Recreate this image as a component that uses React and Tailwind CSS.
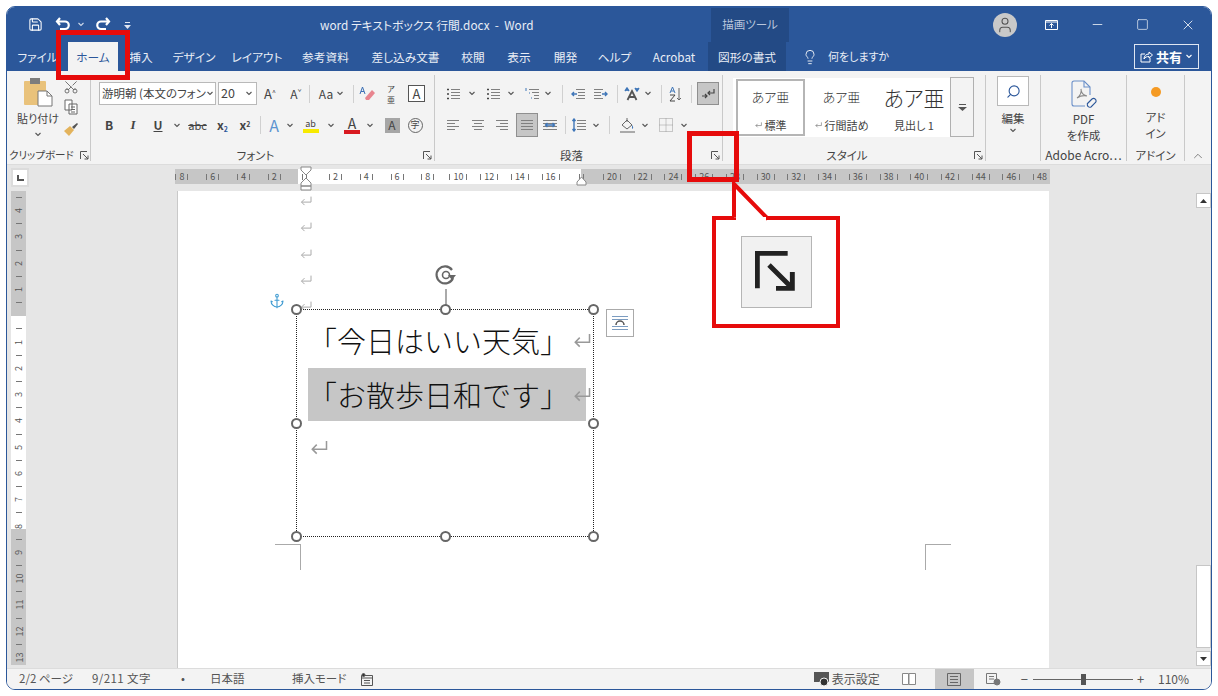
import { Save, Search, Lightbulb, X, Minus, Square, Scissors, Anchor, ChevronUp, User } from 'lucide-react';

// ─── Small drawings ────────────────────────────────────────────
const Chev = ({ color = '#555', className = '' }) => (
  <svg className={`shrink-0 ${className}`} width="8" height="5" viewBox="0 0 8 5" fill="none" stroke={color} strokeWidth="1.1"><path d="M1.500 1l2.500 2.500L6.500 1" /></svg>
);

const Launcher = ({ size = 9, stroke = '#555', width = 1 }) => (
  <svg width={size} height={size} viewBox="0 0 9 9" fill="none" stroke={stroke} strokeWidth={width}>
    <path d="M.5 8V.5H7" /><path d="M3 3l5 5M8 4.500V8H4.500" />
  </svg>
);

const Lines = ({ rows, className = '', children }) => (
  <svg className={`shrink-0 ${className}`} width="14" height="14" viewBox="0 0 14 14" stroke="#808080" strokeWidth="1" fill="none">
    {rows.map(([x1, x2], i) => <path key={i} d={`M${x1} ${2.5 + i * 3}H${x2}`} />)}
    {children}
  </svg>
);

const Ret = ({ w = 12, color = '#aaa' }) => (
  <svg width={w} height={w * 0.85} viewBox="0 0 12 10" fill="none" stroke={color} strokeWidth={1}>
    <path d="M11 .5V6H1.500M4.500 3L1.500 6l3 3" />
  </svg>
);

const Sep = () => <div className="w-px h-[86px] mt-[4px] bg-[#c9c9c9] shrink-0" />;
const Tick = ({ className = '' }) => <span className={`w-px h-[18px] bg-[#d0d0d0] shrink-0 ${className}`} />;

const Cell = ({ className = '', children }) => (
  <div className={`flex items-center justify-center shrink-0 h-full ${className}`}>{children}</div>
);

const GroupLabel = ({ children }) => (
  <div className="mt-auto mb-[2px] h-[14px] flex items-center">
    <span className="flex-1 text-center text-[11.5px] leading-[14px] whitespace-nowrap">{children}</span>
    <span className="w-[14px] flex justify-center"><Launcher /></span>
  </div>
);

const Handle = ({ className }) => (
  <span className={`absolute w-[11px] h-[11px] rounded-full bg-white border-2 border-[#666] ${className}`} />
);

// ─── Title bar + tabs ──────────────────────────────────────────
const tabs = [
  ['ファイル', 'w-[61px]'], ['ホーム', 'w-[50px]'], ['挿入', 'w-[46px]'], ['デザイン', 'w-[60px]'],
  ['レイアウト', 'w-[66px]'], ['参考資料', 'w-[71px]'], ['差し込み文書', 'w-[89px]'], ['校閲', 'w-[46px]'],
  ['表示', 'w-[46px]'], ['開発', 'w-[47px]'], ['ヘルプ', 'w-[51px]'], ['Acrobat', 'w-[68px]'],
];

const TitleBar = () => (
  <div className="h-[35px] flex bg-[#2b579a] text-[#e9eef6] shrink-0">
    <div className="flex items-center w-[313px] pl-[21px] pb-[1px] shrink-0">
      <Save size={15} strokeWidth={1.7} color="#fff" />
      <svg className="ml-[12px]" width="16" height="14" viewBox="0 0 16 14" fill="none" stroke="#fff" strokeWidth="2.200"><path d="M5 1L2 4.500 5 8M2 4.500h8a3.600 3.600 0 010 7.500H5" /></svg>
      <Chev color="#cfd9ea" className="ml-[6px]" />
      <svg className="ml-[10px]" width="16" height="14" viewBox="0 0 16 14" fill="none" stroke="#fff" strokeWidth="2.200"><path d="M11 1l3 3.500L11 8M14 4.500H6A3.600 3.600 0 006 12h5" /></svg>
      <svg className="ml-[13px] mt-[3px]" width="7" height="8" viewBox="0 0 7 8" fill="#dfe6f2"><path d="M1 0h5v1H1zM0 3h7L3.500 7z" /></svg>
    </div>
    <div className="w-[391px] flex items-center text-[11.8px] whitespace-pre shrink-0">word テキストボックス 行間.docx  -  Word</div>
    <div className="w-[78px] mt-[1px] bg-[#234a85] text-[#b9c6dc] text-[11.5px] flex items-center justify-center shrink-0">描画ツール</div>
    <div className="flex-1 flex items-center justify-end">
      <div className="w-[24px] h-[24px] rounded-full bg-[#c9c9c9] flex items-center justify-center mr-[11px]">
        <User size={18} strokeWidth={1.4} color="#555" />
      </div>
      <Cell className="w-[46px]">
        <svg width="13" height="12" viewBox="0 0 13 12" fill="none" stroke="#fff"><path d="M.5 1.500h12v9H.5zM.5 3h12" /><path d="M6.500 9V4.500M4.500 6.500l2-2 2 2" /></svg>
      </Cell>
      <Cell className="w-[46px]"><Minus size={15} strokeWidth={1.2} color="#fff" /></Cell>
      <Cell className="w-[45px]"><Square size={13} strokeWidth={1.2} color="#fff" /></Cell>
      <Cell className="w-[46px]"><X size={16} strokeWidth={1.2} color="#fff" /></Cell>
    </div>
  </div>
);

const TabBar = () => (
  <div className="h-[29px] flex bg-[#2b579a] text-[#e9eef6] text-[11.7px] shrink-0">
    {tabs.map(([label, w]) => (
      <div key={label} className={`${w} flex items-center justify-center shrink-0 ${label === 'ホーム' ? 'bg-[#f3f3f3] text-[#2b579a]' : ''}`}>{label}</div>
    ))}
    <div className="w-[78px] bg-[#234a85] flex items-center justify-center shrink-0">図形の書式</div>
    <div className="ml-[16px] flex items-center gap-[10px]">
      <Lightbulb size={16} strokeWidth={1.3} color="#fff" />
      <span className="text-[11px]">何をしますか</span>
    </div>
    <div className="ml-auto mr-[12px] mt-[2px] w-[65px] h-[25px] border border-[#dfe6f2] flex items-center justify-center gap-[3px]">
      <svg width="13" height="12" viewBox="0 0 13 12" fill="none" stroke="#fff"><path d="M5 3H1v8h9V7" /><path d="M4 8c0-3 2-5 5-5V1l3.500 3L9 7V5.500c-2 0-4 .5-5 2.500z" /></svg>
      <span className="font-bold text-[13px] text-white">共有</span>
      <Chev color="#fff" />
    </div>
  </div>
);

// ─── Ribbon ────────────────────────────────────────────────────
const Clipboard = () => (
  <div className="w-[83px] flex flex-col shrink-0 pt-[6px]">
    <div className="flex">
      <div className="ml-[3px] w-[56px] flex flex-col items-center shrink-0">
        <svg width="30" height="30" viewBox="0 0 30 30">
          <rect x="1" y="4" width="22" height="24" rx="1" fill="#e9c27b" />
          <rect x="7" y="1" width="10" height="6" fill="#7d7d7d" />
          <path d="M15 14h9l5 5v10H15z" fill="#fff" stroke="#777" />
          <path d="M24 14v5h5" fill="none" stroke="#777" />
        </svg>
        <span className="text-[11px] leading-[14px] mt-[4px] whitespace-nowrap">貼り付け</span>
        <Chev className="mt-[7px]" />
      </div>
      <div className="w-[10px] flex flex-col items-center gap-[4px] pt-[2px] shrink-0">
        <Scissors size={16} strokeWidth={1.2} color="#555" className="-rotate-90 shrink-0" />
        <svg className="shrink-0" width="14" height="16" viewBox="0 0 14 16" fill="#fff" stroke="#666"><path d="M1 1h7v10H1zM5 5h8v10H5z" /><path d="M7 8h4M7 10.500h4M7 13h4" /></svg>
        <svg width="16" height="16" viewBox="0 0 16 16" className="mt-[2px] shrink-0"><path d="M1 10l6-5 4 4-5 6z" fill="#e3b35c" /><path d="M9 6l5-4 1 1-4 5z" fill="#555" /></svg>
      </div>
    </div>
    <div className="mt-auto mb-[2px] h-[14px] flex items-center text-[10.5px] pl-[2px]">
      <span className="whitespace-nowrap w-[71px]">クリップボード</span>
      <Launcher />
    </div>
  </div>
);

const Font = () => (
  <div className="w-[343px] flex flex-col shrink-0 pt-[11px]">
    <div className="flex h-[23px]">
      <div className="ml-[8px] w-[117px] bg-white border border-[#b9b9b9] flex items-center justify-between px-[2px] shrink-0">
        <span className="text-[11.5px] whitespace-nowrap">游明朝 (本文のフォン</span>
        <Chev />
      </div>
      <div className="ml-[2px] w-[39px] bg-white border border-[#b9b9b9] flex items-center justify-between px-[2px] pr-[3px] shrink-0">
        <span className="text-[12.5px]">20</span><Chev />
      </div>
      <Cell className="w-[26px] text-[13px]"><span>A<sup className="text-[7px]">^</sup></span></Cell>
      <Cell className="w-[26px] text-[12px]"><span>A<sup className="text-[7px]">ˇ</sup></span></Cell>
      <Tick className="self-center" />
      <Cell className="w-[43px] gap-[3px] text-[12px]">Aa <Chev /></Cell>
      <Tick className="self-center" />
      <Cell className="w-[25px]">
        <svg width="16" height="15" viewBox="0 0 16 15"><path d="M6 12l7-8 3 3-6 7H7z" fill="#e8858f" /><path d="M1 8l2.500-7L6 8M2 5.500h3" fill="none" stroke="#3a6fb5" /></svg>
      </Cell>
      <Cell className="w-[24px] flex-col text-[8px] leading-[11px]"><span>ア</span><span>亜</span></Cell>
      <Cell className="w-[27px]"><span className="w-[17px] h-[17px] border border-[#555] bg-white flex items-center justify-center text-[13px]">A</span></Cell>
    </div>
    <div className="flex h-[24px] mt-[8px] text-[#444]">
      <Cell className="w-[30px] pl-[6px] font-bold text-[12px]">B</Cell>
      <Cell className="w-[24px] font-['Liberation_Serif',serif] italic font-bold text-[13px]">I</Cell>
      <Cell className="w-[26px] font-bold text-[12px] underline">U</Cell>
      <Cell className="w-[12px]"><Chev /></Cell>
      <Cell className="w-[29px] text-[11px] line-through">abc</Cell>
      <Cell className="w-[21px] text-[12px] font-bold"><span>x<sub className="text-[7px] text-[#2b579a]">2</sub></span></Cell>
      <Cell className="w-[24px] text-[12px] font-bold"><span>x<sup className="text-[7px]">2</sup></span></Cell>
      <Cell className="w-[6px]"><Tick /></Cell>
      <Cell className="w-[22px] text-[16px] text-[#5d93d0]">A</Cell>
      <Cell className="w-[10px]"><Chev /></Cell>
      <Cell className="w-[31px]">
        <div className="flex flex-col items-center text-[9px] leading-[11px]">ab<span className="w-[16px] h-[4px] bg-[#f7ea00]" /></div>
      </Cell>
      <Cell className="w-[10px]"><Chev /></Cell>
      <Cell className="w-[32px]">
        <div className="flex flex-col items-center text-[14px] leading-[14px]">A<span className="w-[16px] h-[4px] bg-[#d81920]" /></div>
      </Cell>
      <Cell className="w-[4px]"><Chev /></Cell>
      <Cell className="w-[40px]"><span className="w-[15px] h-[15px] bg-[#a6a6a6] flex items-center justify-center text-[12px]">A</span></Cell>
      <Cell className="w-[6px]"><span className="w-[15px] h-[15px] rounded-full border border-[#666] flex items-center justify-center text-[9px] shrink-0">字</span></Cell>
    </div>
    <GroupLabel>フォント</GroupLabel>
  </div>
);

const Arrow = ({ d, color = '#3f76b8' }) => <path d={d} stroke={color} strokeWidth="1.400" fill="none" />;

const Paragraph = () => {
  const bullets = [[5, 14], [5, 14], [5, 14], [5, 14]];
  const Dots = () => <path d="M1 2.500h2M1 7h2M1 11.500h2" stroke="#444" strokeWidth="1.600" />;
  const indent = [[5, 14], [7, 14], [7, 14], [5, 14]];
  return (
    <div className="w-[287px] flex flex-col shrink-0 pt-[11px]">
      <div className="flex items-center h-[23px]">
        <Lines rows={bullets} className="ml-[11px]"><Dots /></Lines>
        <Chev className="ml-[8px]" />
        <Lines rows={bullets} className="ml-[10px]"><Dots /></Lines>
        <Chev className="ml-[7px]" />
        <Lines rows={[[4, 14], [7, 14], [9, 14], [9, 14]]} className="ml-[10px]"><path d="M1 1v3M4 6h1M6 11h1" stroke="#3f76b8" /></Lines>
        <Chev className="ml-[5px]" />
        <Tick className="ml-[10px]" />
        <Lines rows={indent} className="ml-[8px]"><Arrow d="M6 7H1M3 5L1 7l2 2" /></Lines>
        <Lines rows={[[0, 9], [0, 7], [0, 7], [0, 9]]} className="ml-[9px]"><Arrow d="M8 7h5M11 5l2 2-2 2" /></Lines>
        <Tick className="ml-[9px]" />
        <svg className="ml-[6px] shrink-0" width="16" height="15" viewBox="0 0 16 15" fill="none"><path d="M3.500 14L8 5l4.500 9M5 11h6" stroke="#555" strokeWidth="1.800" /><Arrow d="M1 5l2-3 2 3M3 2v3M11 2l2 3 2-3M13 5V2" /></svg>
        <Chev className="ml-[4px]" />
        <Tick className="ml-[9px]" />
        <svg className="ml-[7px] shrink-0" width="14" height="16" viewBox="0 0 14 16" fill="none"><path d="M1 7l2.500-6L6 7M2 5h3" stroke="#3f76b8" /><path d="M1 9h5L1 15h5" stroke="#444" /><path d="M10 2v12M8 12l2 2 2-2" stroke="#666" /></svg>
        <Tick className="ml-[8px]" />
        <div className="ml-[5px] w-[22px] h-[23px] bg-[#c6c6c6] border border-[#8f8f8f] flex items-center justify-center shrink-0">
          <svg width="14" height="12" viewBox="0 0 14 12" fill="none" stroke="#444" strokeWidth="1.200"><path d="M13 1v4H7M9 3L7 5l2 2M1 8h5M4 6l2 2-2 2" /></svg>
        </div>
      </div>
      <div className="flex items-center h-[24px] mt-[8px]">
        <Lines rows={[[1, 13], [1, 9], [1, 13], [1, 9]]} className="ml-[11px]" />
        <Lines rows={[[1, 13], [3, 11], [1, 13], [3, 11]]} className="ml-[11px]" />
        <Lines rows={[[1, 13], [5, 13], [1, 13], [5, 13]]} className="ml-[10px]" />
        <div className="ml-[7px] w-[22px] h-[24px] bg-[#c6c6c6] border border-[#8f8f8f] flex items-center justify-center shrink-0"><Lines rows={[[1, 13], [1, 13], [1, 13], [1, 13]]} /></div>
        <Lines rows={[[0, 14], [0, 14], [0, 14], [0, 14]]} className="ml-[5px]"><Arrow d="M3 7h8M4.500 5L2.500 7l2 2M9.500 5l2 2-2 2" /></Lines>
        <Tick className="ml-[8px]" />
        <Lines rows={bullets} className="ml-[6px]"><Arrow d="M2 1v12M.5 3L2 1l1.500 2M.5 11L2 13l1.500-2" /></Lines>
        <Chev className="ml-[6px]" />
        <Tick className="ml-[9px]" />
        <svg className="ml-[9px] shrink-0" width="17" height="17" viewBox="0 0 17 17" fill="none" stroke="#666"><path d="M3 8l5-5 5 5-5 4z" /><path d="M8 1v4" /><path d="M13 8c1 1.500 2 3 0 4z" fill="#3f76b8" stroke="none" /><path d="M1 15h15" stroke="#aaa" strokeWidth="2" /></svg>
        <Chev className="ml-[5px]" />
        <svg className="ml-[10px] shrink-0" width="14" height="14" viewBox="0 0 14 14" fill="none" stroke="#999" strokeDasharray="1 1"><path d="M.5.500h13v13H.5zM7 .5v13M.5 7h13" /></svg>
        <Chev className="ml-[7px]" />
      </div>
      <GroupLabel>段落</GroupLabel>
    </div>
  );
};

const StyleCard = ({ className = '', big, small, label, ret = true }) => (
  <div className={`flex flex-col items-center shrink-0 ${className}`}>
    <span className={`${big} font-light leading-[30px] mt-[1px] text-[#333] whitespace-nowrap`}>{small}</span>
    <span className="text-[11px] leading-[16px] mt-[5px] flex items-center gap-[3px] whitespace-nowrap">{ret && <Ret w={7} color="#666" />}{label}</span>
  </div>
);

const Styles = () => (
  <div className="w-[262px] flex flex-col shrink-0 pt-[6px]">
    <div className="flex ml-[10px] h-[60px]">
      <div className="w-[217px] h-[59px] mt-[1px] bg-white flex pl-[3px] pt-px shrink-0">
        <StyleCard className="w-[69px] h-[57px] border-2 border-[#b5b5b5]" big="text-[13px]" small="あア亜" label="標準" />
        <StyleCard className="w-[73px] pt-[2px]" big="text-[13px]" small="あア亜" label="行間詰め" />
        <StyleCard className="w-[72px] pt-[2px]" big="text-[21px]" small="あア亜" label="見出し 1" ret={false} />
      </div>
      <div className="w-[24px] border border-[#b0b0b0] flex items-center justify-center">
        <svg width="9" height="7" viewBox="0 0 9 7" fill="#555"><path d="M1 0h7v1H1zM0 3h9L4.500 7z" /></svg>
      </div>
    </div>
    <GroupLabel>スタイル</GroupLabel>
  </div>
);

const Edit = () => (
  <div className="w-[54px] flex flex-col items-center shrink-0 pt-[5px]">
    <div className="w-[32px] h-[30px] bg-white border border-[#b9b9b9] flex items-center justify-center">
      <Search size={15} strokeWidth={1.8} color="#2b579a" className="-scale-x-100" />
    </div>
    <span className="text-[11.5px] leading-[14px] mt-[5px]">編集</span>
    <Chev className="mt-[3px]" />
  </div>
);

const Pdf = () => (
  <div className="w-[85px] flex flex-col items-center shrink-0 pt-[9px]">
    <svg width="26" height="30" viewBox="0 0 26 30" fill="none" stroke="#6a8fc8" strokeWidth="1.100">
      <path d="M14 26H3a2 2 0 01-2-2V3a2 2 0 012-2h10l6 6v8" /><path d="M13 1v6h6" />
      <path d="M6 18c3-2 5-6 4-9 0 3 2 6 6 7-4-1-7 0-10 2z" stroke="#8a8a8a" />
      <path d="M16 24l5-5a2.500 2.500 0 013.500 3.500L20 27a2.500 2.500 0 01-3.500-3" stroke="#2b579a" />
    </svg>
    <span className="text-[11.5px] leading-[16px] mt-[1px]">PDF</span>
    <span className="text-[11.5px] leading-[16px]">を作成</span>
    <span className="mt-auto mb-[2px] h-[14px] text-[12px] leading-[14px] whitespace-nowrap">Adobe Acro⋯</span>
  </div>
);

const Addin = () => (
  <div className="w-[57px] flex flex-col items-center shrink-0 pt-[16px]">
    <span className="w-[10px] h-[10px] rounded-full bg-[#f59a23]" />
    <span className="text-[11.5px] leading-[16px] mt-[12px]">アド</span>
    <span className="text-[11.5px] leading-[16px]">イン</span>
    <span className="mt-auto mb-[2px] h-[14px] text-[11.5px] leading-[14px] whitespace-nowrap">アドイン</span>
  </div>
);

const Ribbon = () => (
  <div className="h-[94px] flex bg-[#f3f3f3] text-[#444] shrink-0 border-b border-[#dcdcdc]">
    <Clipboard /><Sep />
    <Font /><Sep />
    <Paragraph /><Sep />
    <Styles /><Sep />
    <Edit /><Sep />
    <Pdf /><Sep />
    <Addin /><Sep />
    <div className="flex-1 flex items-end justify-center pb-[1px]"><ChevronUp size={14} strokeWidth={1.2} color="#555" /></div>
  </div>
);

// ─── Rulers ────────────────────────────────────────────────────
const hRuler = [];
for (let n = -8; n <= 48; n += 2) hRuler.push(n);

const RulerRow = () => (
  <div className="h-[25px] flex items-start bg-[#e6e6e6] shrink-0 relative">
    <div className="ml-[4px] mt-[3px] w-[18px] h-[19px] bg-white border-2 border-[#dcdcdc] flex items-center justify-center shrink-0">
      <span className="w-[7px] h-[6px] border-l-2 border-b-2 border-[#555]" />
    </div>
    <div className="ml-[146px] mt-[4px] w-[875px] h-[15px] overflow-hidden flex bg-[linear-gradient(90deg,#c6c6c6_123px,#fff_123px,#fff_406px,#c6c6c6_406px)] shrink-0">
      <div className="flex -ml-[8.4px] text-[9px] text-[#555] shrink-0">
        {hRuler.map((n) => (
          <div key={n} className="w-[30.72px] flex items-center justify-center gap-[3px] shrink-0">
            <span className="w-px h-[6px] bg-[#777]" />
            {n !== 0 && n !== 18 && <span className="leading-[15px]">{Math.abs(n)}</span>}
            <span className="w-px h-[6px] bg-[#777]" />
          </div>
        ))}
      </div>
    </div>
    {/* indent markers sit on top of the ruler */}
    <svg className="absolute left-[293px] top-[1px]" width="12" height="25" viewBox="0 0 12 25" fill="#fff" stroke="#888">
      <path d="M1 1h10v3L6 9 1 4zM1 17l5-5 5 5v3H1zM1 20h10v4H1z" />
    </svg>
    <svg className="absolute left-[569px] top-[11px]" width="11" height="10" viewBox="0 0 11 10" fill="#fff" stroke="#888"><path d="M1 9V6l4.500-5L10 6v3z" /></svg>
  </div>
);

const vRuler = [];
for (let n = -4; n <= 13; n++) {
  if (n !== 0) vRuler.push(Math.abs(n));
  else vRuler.push('');
}

const VerticalRuler = () => (
  <div className="ml-[4px] mt-[1px] w-[15px] h-[474px] flex flex-col items-center overflow-hidden text-[9px] text-[#555] bg-[linear-gradient(180deg,#c6c6c6_125px,#fff_125px,#fff_338px,#c6c6c6_338px)]">
    {vRuler.map((n, i) => (
      <div key={i} className="contents">
        <div className="h-[13.15px] flex items-center justify-center shrink-0"><span className="w-[6px] h-px bg-[#777]" /></div>
        <div className="h-[13.15px] flex items-center justify-center shrink-0"><span className="-rotate-90 leading-[9px]">{n}</span></div>
      </div>
    ))}
  </div>
);

// ─── Document ──────────────────────────────────────────────────
const TextBox = () => (
  <>
    <Anchor size={16} strokeWidth={1.6} color="#3f9bd1" className="absolute left-[91px] top-[102px]" />
    <div className="absolute left-[256px] top-[72px] w-[24px] h-[24px]">
      <svg width="24" height="24" viewBox="0 0 24 24" fill="none" stroke="#666" strokeWidth="2.200">
        <path d="M19 15a8.500 8.500 0 11-1-8" /><circle cx="12" cy="12" r="3.500" strokeWidth="1.600" /><path d="M14 12h8l-4 5z" fill="#666" stroke="none" />
      </svg>
    </div>
    <span className="absolute left-[267px] top-[98px] w-[2px] h-[20px] bg-[#aaa]" />
    <div className="absolute left-[118px] top-[118px] w-[298px] h-[228px] border border-dotted border-[#222]">
      <div className="pl-[11px] pt-[5px] font-light text-[29px] text-[#111] leading-[53px] [font-feature-settings:normal]">
        <div className="flex items-center h-[53px] whitespace-nowrap -translate-y-[1px]">「今日はいい天気」<span className="ml-[4px]"><Ret w={18} color="#999" /></span></div>
        <div className="flex items-center h-[53px] w-[278px] bg-[#c6c6c6] whitespace-nowrap">「お散歩日和です」<span className="ml-[4px]"><Ret w={18} color="#999" /></span></div>
        <div className="flex items-center h-[53px] pl-[2px]"><Ret w={18} color="#999" /></div>
      </div>
      <Handle className="-left-[6px] -top-[6px]" />
      <Handle className="left-[143px] -top-[6px]" />
      <Handle className="-right-[6px] -top-[6px]" />
      <Handle className="-left-[6px] top-[108px]" />
      <Handle className="-right-[6px] top-[108px]" />
      <Handle className="-left-[6px] -bottom-[6px]" />
      <Handle className="left-[143px] -bottom-[6px]" />
      <Handle className="-right-[6px] -bottom-[6px]" />
    </div>
    <div className="absolute left-[428px] top-[118px] w-[28px] h-[28px] bg-white border border-[#aaa] flex items-center justify-center">
      <svg width="18" height="16" viewBox="0 0 18 16" fill="none" stroke="#7c9cc0"><path d="M1 1.500h16M1 4.500h16M1 11.500h16M1 14.500h16" /><path d="M5 10a4 4 0 018 0" stroke="#555" strokeWidth="1.500" /></svg>
    </div>
  </>
);

const Page = () => (
  <div className="relative w-[872px] mt-px bg-white border-l border-[#c9c9c9] shrink-0 pl-[122px]">
    <div className="-mt-[3px]">
      {[0, 1, 2, 3, 4].map((i) => (
        <div key={i} className="h-[26.300px] flex items-center"><Ret /></div>
      ))}
    </div>
    <TextBox />
    {/* page margin marks */}
    <span className="absolute left-[97px] top-[353px] w-[26px] h-[26px] border-t border-r border-[#aaa]" />
    <span className="absolute left-[747px] top-[353px] w-[26px] h-[26px] border-t border-l border-[#aaa]" />
  </div>
);

const Scrollbar = () => (
  <div className="w-[16px] ml-[146px] flex flex-col items-center shrink-0 pt-[3px] pb-[2px]">
    <div className="w-[15px] h-[15px] bg-white border border-[#c6c6c6] flex items-center justify-center">
      <svg width="7" height="4" viewBox="0 0 7 4" fill="#333"><path d="M3.500 0L7 4H0z" /></svg>
    </div>
    <div className="w-[15px] h-[83px] mt-auto mb-[3px] bg-white border border-[#c6c6c6]" />
    <div className="w-[15px] h-[15px] bg-white border border-[#c6c6c6] flex items-center justify-center">
      <svg width="7" height="4" viewBox="0 0 7 4" fill="#333"><path d="M3.500 4L7 0H0z" /></svg>
    </div>
  </div>
);

// ─── Status bar ────────────────────────────────────────────────
const StatusBar = () => (
  <div className="flex-1 flex items-center bg-[#f3f3f3] text-[#555] text-[11.5px] whitespace-nowrap border-t border-[#dcdcdc]">
    <span className="ml-[12px] w-[73px]">2/2 ページ</span>
    <span className="w-[89px] tracking-[0.4px]">9/211 文字</span>
    <span className="w-[29px]">•</span>
    <span className="w-[82px]">日本語</span>
    <span className="w-[69px]">挿入モード</span>
    <svg width="12" height="13" viewBox="0 0 12 13" fill="none" stroke="#555"><path d="M.5 2.500h11v10H.5z" /><path d="M.5 5h11M3 7.500h6M3 10h6" /><circle cx="2.500" cy="2" r="1.500" fill="#333" /></svg>
    <div className="ml-auto flex items-center h-full">
      <svg width="18" height="16" viewBox="0 0 18 16"><rect x="1" y="1" width="15" height="10" fill="#555" /><circle cx="11" cy="11" r="4" fill="#333" stroke="#f3f3f3" /></svg>
      <span className="ml-px text-[12px] w-[51px]">表示設定</span>
      <Cell className="w-[52px]">
        <svg width="14" height="12" viewBox="0 0 14 12" fill="#fff" stroke="#888"><path d="M.5.500h6v11h-6zM7 .500h6.500v11H7z" /></svg>
      </Cell>
      <Cell className="w-[39px] bg-[#c6c6c6]">
        <svg width="14" height="13" viewBox="0 0 14 13" fill="none" stroke="#666"><path d="M.5.500h13v12H.5zM3 3.500h8M3 6.500h8M3 9.500h8" /></svg>
      </Cell>
      <Cell className="w-[39px]">
        <svg width="15" height="13" viewBox="0 0 15 13" fill="none" stroke="#777"><path d="M.5.500h10v10H.5zM3 3.500h5M3 6h5" /><circle cx="11" cy="9" r="3" fill="#777" /></svg>
      </Cell>
      <span className="ml-[8px] text-[13px]">−</span>
      <div className="relative ml-[5px] w-[100px] h-px bg-[#666]">
        <span className="absolute left-[48px] -top-[5px] w-[5px] h-[11px] bg-[#555]" />
      </div>
      <span className="ml-[4px] text-[13px] w-[21px]">+</span>
      <span className="text-[12px] w-[53px]">110%</span>
    </div>
  </div>
);

// ─── Screenshot annotations ────────────────────────────────────
const Annotations = () => (
  <>
    <div className="absolute left-[56px] top-[30px] w-[74px] h-[50px] border-[5px] border-[#e60b0b]" />
    <div className="absolute left-[687px] top-[131px] w-[52px] h-[51px] border-[5px] border-[#e60b0b]" />
    <div className="absolute left-[712px] top-[216px] w-[128px] h-[112px] border-[4px] border-[#e60b0b] bg-white flex items-center justify-center">
      <div className="w-[71px] h-[72px] bg-[#f1f1f1] border border-[#b5b5b5] flex items-center justify-center">
        <Launcher size={42} stroke="#222" width={1.050} />
      </div>
    </div>
    <svg className="absolute left-[728px] top-[179px]" width="46" height="42" viewBox="0 0 46 42" fill="#fff" stroke="#e60b0b" strokeWidth="4">
      <path d="M6 38.500V5l34 35" />
      <path d="M8 42h30V38H8z" fill="#fff" stroke="none" />
    </svg>
  </>
);

const App = () => (
  <div className="relative w-[1218px] h-[696px] bg-white p-[6px] overflow-hidden font-['Noto_Sans_CJK_JP','Noto_Sans',sans-serif] [font-feature-settings:'palt']">
    <div className="w-[1206px] h-[684px] border border-[#2b579a] rounded-[9px] overflow-hidden flex flex-col">
      <TitleBar />
      <TabBar />
      <Ribbon />
      <RulerRow />
      <div className="h-[478px] flex bg-[#e6e6e6] shrink-0">
        <div className="w-[170px] shrink-0"><VerticalRuler /></div>
        <Page />
        <Scrollbar />
      </div>
      <StatusBar />
    </div>
    <Annotations />
  </div>
);

export default App;
